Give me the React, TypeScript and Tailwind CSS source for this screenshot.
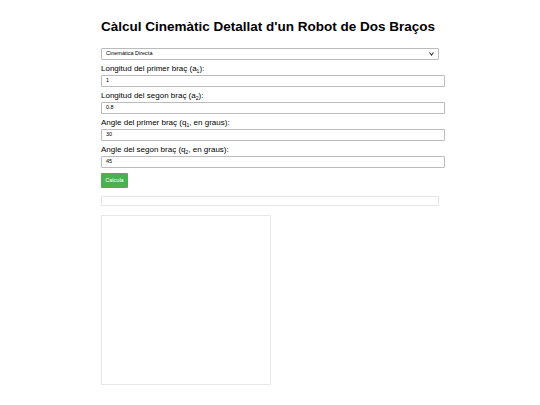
import React from 'react';

const App = () => {
  const fields = [
    { label: 'Longitud del primer braç (a', sub: '1', tail: '):', value: '1' },
    { label: 'Longitud del segon braç (a', sub: '2', tail: '):', value: '0.8' },
    { label: 'Angle del primer braç (q', sub: '1', tail: ', en graus):', value: '30' },
    { label: 'Angle del segon braç (q', sub: '2', tail: ', en graus):', value: '45' },
  ];

  return (
    <div className="min-h-[405px] bg-white font-['Liberation_Sans',Arial,sans-serif] text-black">
      <div className="ml-[101px] w-[344px] pt-[18px]">
        <h1 className="text-[13.5px] font-bold leading-[18px] h-[18px] mb-[12px] whitespace-nowrap">
          Càlcul Cinemàtic Detallat d'un Robot de Dos Braços
        </h1>

        {/* Selector de mode */}
        <div className="w-[338px] h-[12px] border border-[#bbb] rounded-[1px] flex items-center justify-between px-[4px]">
          <span className="text-[5.5px] leading-none">Cinemàtica Directa</span>
          <svg width="5" height="4" viewBox="0 0 10 8">
            <path d="M1 1 L5 6 L9 1" stroke="#333" strokeWidth="2.2" fill="none" />
          </svg>
        </div>

        {fields.map((f) => (
          <div key={f.label} className="flex flex-col">
            <label className="text-[8px] leading-[10px] h-[10px] mt-[4px] mb-[1px] whitespace-nowrap">
              {f.label}
              <span className="text-[5px] leading-none relative top-[2px]">{f.sub}</span>
              {f.tail}
            </label>
            <div className="w-[344px] h-[12px] border border-[#bbb] rounded-[1px] flex items-center px-[4px]">
              <span className="text-[5.5px] leading-none">{f.value}</span>
            </div>
          </div>
        ))}

        <button className="mt-[5px] w-[27px] h-[15px] bg-[#4caf50] text-white text-[5.5px] rounded-[1px] flex items-center justify-center">
          Calcula
        </button>

        {/* Resultats */}
        <div className="mt-[8px] w-[338px] h-[10px] border border-[#e6e6e6]" />

        {/* Canvas */}
        <div className="mt-[9px] w-[170px] h-[170px] border border-[#e6e6e6]" />
      </div>
    </div>
  );
};

export default App;
